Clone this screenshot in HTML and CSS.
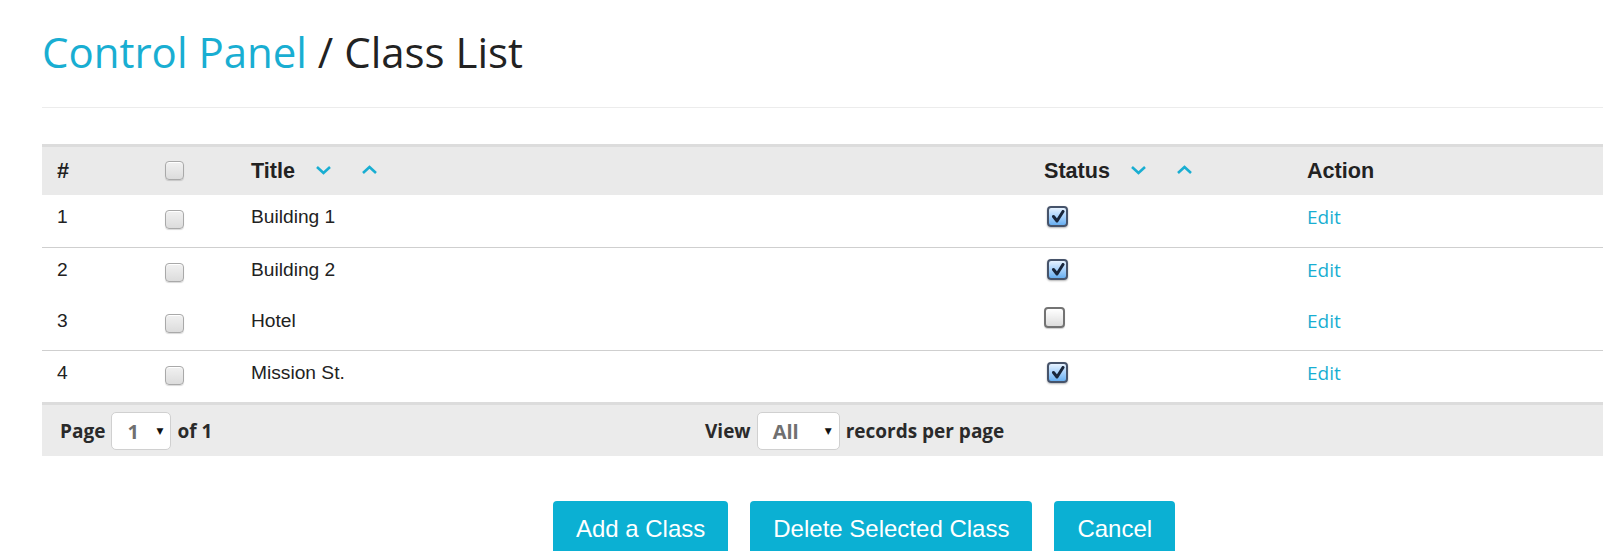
FILE: index.html
```html
<!DOCTYPE html>
<html lang="en">
<head>
<meta charset="utf-8">
<title>Class List</title>
<link rel="stylesheet" href="styles.css">
</head>
<body>
<div class="page">
  <h1 class="heading"><a class="crumb" href="#">Control Panel</a> / Class List</h1>
  <hr class="rule">
  <table class="grid">
    <colgroup>
      <col class="c-num"><col class="c-sel"><col class="c-title"><col class="c-status"><col class="c-action">
    </colgroup>
    <thead>
      <tr>
        <th>#</th>
        <th><span class="cb"></span></th>
        <th>Title<span class="sort"><svg class="chev" viewBox="0 0 17 10" width="17" height="10"><polyline points="2,2 8.5,8 15,2"/></svg><svg class="chev" viewBox="0 0 17 10" width="17" height="10"><polyline points="2,8 8.5,2 15,8"/></svg></span></th>
        <th>Status<span class="sort"><svg class="chev" viewBox="0 0 17 10" width="17" height="10"><polyline points="2,2 8.5,8 15,2"/></svg><svg class="chev" viewBox="0 0 17 10" width="17" height="10"><polyline points="2,8 8.5,2 15,8"/></svg></span></th>
        <th>Action</th>
      </tr>
    </thead>
    <tbody>
      <tr class="lined first">
        <td>1</td><td><span class="cb"></span></td><td>Building 1</td>
        <td><span class="st on"><svg viewBox="0 0 14 14" width="14" height="14"><polyline points="2.5,6.5 6,11 12,1.5"/></svg></span></td>
        <td><a class="edit" href="#">Edit</a></td>
      </tr>
      <tr>
        <td>2</td><td><span class="cb"></span></td><td>Building 2</td>
        <td><span class="st on"><svg viewBox="0 0 14 14" width="14" height="14"><polyline points="2.5,6.5 6,11 12,1.5"/></svg></span></td>
        <td><a class="edit" href="#">Edit</a></td>
      </tr>
      <tr class="lined">
        <td>3</td><td><span class="cb"></span></td><td>Hotel</td>
        <td><span class="st off"></span></td>
        <td><a class="edit" href="#">Edit</a></td>
      </tr>
      <tr>
        <td>4</td><td><span class="cb"></span></td><td>Mission St.</td>
        <td><span class="st on"><svg viewBox="0 0 14 14" width="14" height="14"><polyline points="2.5,6.5 6,11 12,1.5"/></svg></span></td>
        <td><a class="edit" href="#">Edit</a></td>
      </tr>
    </tbody>
  </table>
  <div class="pager">
    <div class="pager-group">
      <span>Page</span>
      <span class="select sel-page"><span class="sel-val">1</span><span class="sel-arrow">▼</span></span>
      <span>of 1</span>
    </div>
    <div class="pager-group">
      <span>View</span>
      <span class="select sel-view"><span class="sel-val">All</span><span class="sel-arrow">▼</span></span>
      <span>records per page</span>
    </div>
  </div>
  <div class="actions">
    <button class="btn">Add a Class</button>
    <button class="btn">Delete Selected Class</button>
    <button class="btn">Cancel</button>
  </div>
</div>
</body>
</html>
```
FILE: styles.css
```css
html, body {
  margin: 0;
  padding: 0;
  background: #fff;
  overflow: hidden;
}

.page {
  margin-left: 42px;
  width: 1644px;
  font-family: "Liberation Sans", Arial, sans-serif;
  color: #222;
}

.heading {
  margin: 0;
  padding-top: 29px;
  height: 46px;
  line-height: 46px;
  font-family: "Open Sans", sans-serif;
  font-weight: 400;
  font-size: 42px;
  color: #222;
}

.crumb {
  color: #19aed2;
  text-decoration: none;
}

.rule {
  margin: 32px 0 0;
  border: 0;
  border-top: 1px solid #ececec;
  height: 0;
}

.grid {
  margin-top: 36px;
  width: 100%;
  border-collapse: collapse;
  table-layout: fixed;
}

.c-num { width: 108px; }
.c-sel { width: 86px; }
.c-title { width: 793px; }
.c-status { width: 263px; }

.grid thead tr {
  background: #eaeaea;
  border-top: 3px solid #dcdcdc;
}

.grid th {
  height: 48px;
  padding: 0 15px;
  text-align: left;
  vertical-align: middle;
  font-size: 21.6px;
  font-weight: 700;
  line-height: 24px;
  color: #222;
}

.grid th .cb {
  margin-top: 2px;
}

.grid td {
  padding: 10px 15px 16px;
  vertical-align: top;
  font-size: 19.2px;
  line-height: 24px;
  color: #222;
}

.grid tr.first td {
  padding-bottom: 17px;
}

.grid tr.lined {
  border-bottom: 1px solid #cfcfcf;
}

.sort {
  display: inline-flex;
  gap: 29px;
  margin-left: 20px;
  vertical-align: middle;
  position: relative;
  top: -2px;
}

.chev {
  display: block;
  fill: none;
  stroke: #19aed2;
  stroke-width: 2.6;
  stroke-linecap: butt;
  stroke-linejoin: miter;
}

.cb {
  display: inline-block;
  vertical-align: top;
  width: 19px;
  height: 19px;
  margin-top: 5px;
  box-sizing: border-box;
  border: 1px solid #a9a9a9;
  border-radius: 4px;
  background: linear-gradient(#f1f1f1, #dcdcdc);
  box-shadow: 0 1px 1px rgba(0, 0, 0, 0.15), inset 0 1px 0 #fff;
}

.st {
  display: inline-block;
  vertical-align: top;
  box-sizing: border-box;
  border-radius: 4px;
}

.st.on {
  width: 21px;
  height: 21px;
  margin-top: 1px;
  margin-left: 3px;
  border: 2px solid #46536a;
  background: linear-gradient(#e6f2ff, #a9d2fb 50%, #67aef0);
  box-shadow: 0 1px 2px rgba(0, 0, 0, 0.3);
  display: inline-flex;
  align-items: center;
  justify-content: center;
}

.st.on svg {
  fill: none;
  stroke: #18253a;
  stroke-width: 3;
  stroke-linecap: round;
  stroke-linejoin: round;
}

.st.off {
  width: 21px;
  height: 21px;
  margin-top: -2px;
  border: 2px solid #737373;
  background: linear-gradient(#ffffff, #f0f0f0 45%, #dcdcdc);
  box-shadow: 0 1px 1px rgba(0, 0, 0, 0.2);
}

.edit {
  font-family: "Open Sans", sans-serif;
  font-size: 19px;
  color: #19aed2;
  text-decoration: none;
}

.pager {
  border-top: 3px solid #dcdcdc;
  background: #ebebeb;
  height: 51px;
  padding-left: 18px;
  display: grid;
  grid-template-columns: 645px 1fr;
  align-items: center;
  font-family: "Open Sans", sans-serif;
  font-weight: 700;
  font-size: 19px;
  color: #2a2a2a;
}

.pager-group {
  display: flex;
  align-items: center;
  gap: 6px;
}

.select {
  box-sizing: border-box;
  height: 38px;
  border: 1px solid #d0d0d0;
  border-radius: 5px;
  background: #fff;
  display: flex;
  align-items: center;
  justify-content: space-between;
  padding: 0 7px 0 15px;
  margin-top: 1px;
}

.sel-page { width: 60px; }
.sel-view { width: 83px; }

.sel-val {
  color: #707070;
  font-size: 20px;
  font-weight: 700;
}

.sel-arrow {
  font-size: 9px;
  color: #111;
  font-family: "DejaVu Sans", sans-serif;
}

.actions {
  margin-top: 45px;
  display: flex;
  justify-content: center;
  gap: 22px;
}

.btn {
  border: 0;
  border-radius: 4px;
  background: #0bb0d3;
  color: #fff;
  font-family: "Liberation Sans", Arial, sans-serif;
  font-size: 24px;
  line-height: 28px;
  padding: 14px 23px 20px;
  cursor: pointer;
}
```
